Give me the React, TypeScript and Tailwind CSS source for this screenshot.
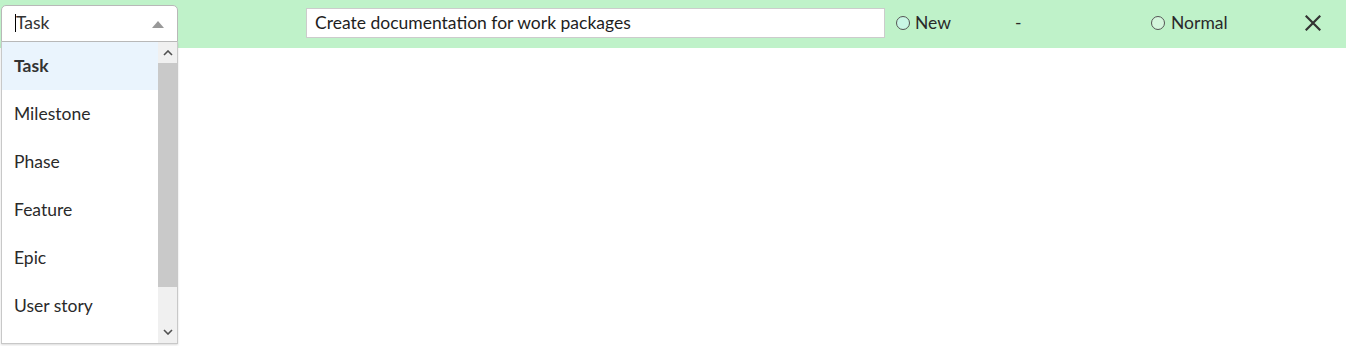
import React from "react";

const options = ["Task", "Milestone", "Phase", "Feature", "Epic", "User story"];

export default function App() {
  return (
    <div className="relative w-[1346px] h-[346px] bg-white overflow-hidden text-[#2a2a2a]" style={{ fontFamily: "Lato, 'Noto Sans', sans-serif" }}>
      {/* green row */}
      <div className="h-[48px] bg-[#bff2c9] flex items-center pb-[2px]">
        <div className="w-[306px] shrink-0" />
        <div className="w-[579px] h-[30px] bg-white border border-[#cccccc] flex items-center pl-[8px] text-[17.5px] text-[#1e1e1e]">
          Create documentation for work packages
        </div>
        <div className="flex items-center ml-[11px] w-[119px]">
          <span className="w-[14px] h-[14px] rounded-full border border-[#555555] bg-[#c8f6e4] mr-[5px]" />
          <span className="text-[17.5px]">New</span>
        </div>
        <div className="w-[136px] text-[17.5px]">-</div>
        <div className="flex items-center w-[146px]">
          <span className="w-[14px] h-[14px] rounded-full border border-[#555555] bg-[#d4f6dc] mr-[6px]" />
          <span className="text-[17.5px]">Normal</span>
        </div>
        <div className="ml-[8px]">
          <svg width="16" height="16" viewBox="0 0 16 16">
            <path d="M1.5 1.5 L14.5 14.5 M14.5 1.5 L1.5 14.5" stroke="#333333" strokeWidth="2.2" strokeLinecap="square" />
          </svg>
        </div>
      </div>

      {/* dropdown overlay */}
      <div className="absolute left-[1px] top-[5px] w-[177px]">
        <div className="h-[37px] bg-white border border-[#b8b8b8] rounded-t-[5px] flex items-center pl-[13px] pb-[1px] relative">
          <span className="w-[1px] h-[18px] bg-black" />
          <span className="text-[17.5px] text-[#333333]">Task</span>
          <svg className="absolute right-[13px] top-[15px]" width="12" height="7" viewBox="0 0 12 7">
            <path d="M0 7 L6 0 L12 7 Z" fill="#999999" />
          </svg>
        </div>
        <div className="h-[302px] bg-white border border-t-0 border-[#c8c8c8] flex shadow-[0_1px_2px_rgba(0,0,0,0.15)]">
          <div className="flex-1 flex flex-col">
            {options.map((o, i) => (
              <div
                key={o}
                className={
                  "h-[48px] flex items-center pl-[12px] text-[17.5px] " +
                  (i === 0 ? "bg-[#eaf4fd] font-bold text-[#333333]" : "text-[#2a2a2a]")
                }
              >
                {o}
              </div>
            ))}
          </div>
          <div className="w-[19px] bg-[#f0f0f0] flex flex-col">
            <div className="h-[21px] flex items-center justify-center">
              <svg width="10" height="6" viewBox="0 0 10 6">
                <path d="M1 5 L5 1 L9 5" stroke="#505050" strokeWidth="1.6" fill="none" />
              </svg>
            </div>
            <div className="h-[224px] bg-[#c9c9c9]" />
            <div className="flex-1 flex items-end justify-center pb-[8px]">
              <svg width="10" height="6" viewBox="0 0 10 6">
                <path d="M1 1 L5 5 L9 1" stroke="#505050" strokeWidth="1.6" fill="none" />
              </svg>
            </div>
          </div>
        </div>
      </div>
    </div>
  );
}
